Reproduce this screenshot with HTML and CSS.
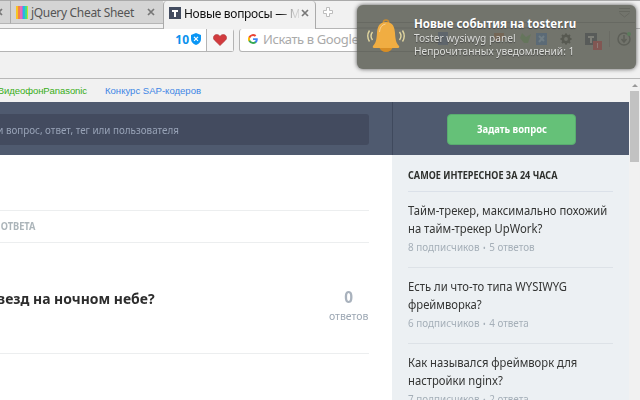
FILE: index.html
```html
<!DOCTYPE html>
<html lang="ru">
<head>
<meta charset="utf-8">
<title>Новые вопросы</title>
<link rel="stylesheet" href="styles.css">
</head>
<body>
<div class="window">
  <div class="tabs">
    <div class="tab tab-prev"><svg class="close" viewBox="0 0 8 8"><path d="M1 1l6 6M7 1L1 7"/></svg></div>
    <div class="tab tab-jquery"><i class="stripes"></i><span class="t-jquery">jQuery Cheat Sheet</span><svg class="close" viewBox="0 0 8 8"><path d="M1 1l6 6M7 1L1 7"/></svg></div>
    <div class="tab tab-active"><svg class="fav" viewBox="0 0 12 12"><path fill="#434c60" d="M0 0h12v12H0z"/><path fill="#fff" d="M3 3h6v2H7v5H5V5H3z"/></svg><span class="t-active">Новые вопросы — М</span><svg class="close" viewBox="0 0 8 8"><path d="M1 1l6 6M7 1L1 7"/></svg></div>
    <svg class="plus" viewBox="0 0 12 12"><path fill="#fff" stroke="#bdbdbd" d="M4.5 1.5h3v3h3v3h-3v3h-3v-3h-3v-3h3z"/></svg>
  </div>
  <div class="toolbar">
    <div class="address">
      <div class="blocked"><span>10</span><svg viewBox="0 0 10 12"><path fill="#0a96f5" d="M5 0l5 2v4q0 4-5 6Q0 10 0 6V2z"/><path stroke="#fff" stroke-width="1.2" d="M3 3.800l4 4M7 3.800l-4 4"/></svg></div>
      <div class="like"><svg viewBox="0 0 14 12"><path fill="#d23b3e" stroke="#a93a3c" stroke-width=".6" d="M7 11.600L1.300 6C-.7 3.500 1 .5 3.700.5 5.500.5 6.500 1.500 7 2.500 7.500 1.500 8.500.5 10.300.5 13 .5 14.700 3.500 12.700 6z"/></svg></div>
    </div>
    <div class="google"><svg viewBox="0 0 24 24"><path fill="#4285f4" d="M23.500 12.300c0-.8-.1-1.600-.2-2.300H12v4.500h6.500a5.500 5.500 0 0 1-2.400 3.600v3h3.900c2.200-2 3.500-5.100 3.500-8.800z"/><path fill="#34a853" d="M12 24c3.200 0 6-1.100 8-2.900l-3.900-3a7.200 7.200 0 0 1-10.800-3.800h-4v3.100A12 12 0 0 0 12 24z"/><path fill="#fbbc05" d="M5.300 14.300a7.200 7.200 0 0 1 0-4.600V6.600h-4a12 12 0 0 0 0 10.800z"/><path fill="#ea4335" d="M12 4.800c1.800 0 3.300.6 4.600 1.800L20 3.200A12 12 0 0 0 1.300 6.600l4 3.100A7.200 7.200 0 0 1 12 4.800z"/></svg><span>Искать в Google п</span></div>
  </div>
  <div class="ads"><div class="ad-green"><span>ВидеофонPanasonic</span></div><span class="ad-blue">Конкурс SAP-кодеров</span></div>
  <div class="viewport">
    <main class="main">
      <div class="head"><div class="search"><div class="search-text"><span>и вопрос, ответ, тег или пользователя</span></div></div></div>
      <div class="filters"><div class="filter"><span>ОТВЕТА</span></div></div>
      <div class="question">
        <div class="title"><span>везд на ночном небе?</span></div>
        <div class="answers"><b>0</b><span>ответов</span></div>
      </div>
    </main>
    <aside class="side">
      <div class="side-head"><div class="ask"><span>Задать вопрос</span></div></div>
      <div class="side-body">
        <h2><span>САМОЕ ИНТЕРЕСНОЕ ЗА 24 ЧАСА</span></h2>
        <article><p>Тайм-трекер, максимально похожий<br>на тайм-трекер UpWork?</p><small>8 подписчиков <i>•</i> 5 ответов</small></article>
        <article><p>Есть ли что-то типа WYSIWYG<br>фреймворка?</p><small>6 подписчиков <i>•</i> 4 ответа</small></article>
        <article><p>Как назывался фреймворк для<br>настройки nginx?</p><small>7 подписчиков <i>•</i> 2 ответа</small></article>
      </div>
    </aside>
    <div class="scroll"><i class="arrow"></i><i class="thumb"></i></div>
  </div>
  <div class="toast">
    <svg class="ghosts" viewBox="0 0 278 64" fill="none">
      <path d="M0 17.500h278M0 23h193M0 46.500h193" stroke="#4a4c46" stroke-opacity=".45"/>
      <path fill="#535e6c" d="M81 27h10v13H81z"/><path fill="#775e47" d="M137 28h10v8h-10z"/><path fill="#5e7752" d="M165 28l4 4 5-3-3 9h-4l-4-5z"/>
      <rect x="179" y="28" width="11" height="12" fill="#4c657d"/><path stroke="#718596" stroke-width="2" d="M182 31l5 5M187 31l-5 6"/>
      <circle cx="209" cy="34" r="3.200" stroke="#474941" stroke-width="2.600"/><path stroke="#474941" stroke-width="2" d="M209 28.500v2M209 37v2.500M203.500 34h2M212.500 34h2M205 30l1.500 1.500M213 30l-1.500 1.500M205 38l1.500-1.500M213 38l-1.500-1.500"/>
      <path fill="#484c4e" d="M228 28h12v12h-12z"/><path fill="#85867f" d="M231 31h6v2h-2v5h-2v-5h-2z"/><path fill="#8b4543" d="M236 36h9v9h-9z"/><path stroke="#a2817d" d="M240.500 38v5"/>
      <path stroke="#65665f" d="M252.500 26v16"/><circle cx="267" cy="34" r="6" stroke="#50524b" stroke-width="1.500"/><path stroke="#50524b" stroke-width="1.500" d="M267 30v6M264.500 34l2.500 3 2.500-3"/><circle cx="272" cy="29" r="2" fill="#4c8050"/>
      <path stroke="#5e5f58" d="M262 3.500h11M262 6.500h11M262.500 8l5 4 5-4"/>
    </svg>
    <svg class="bell" viewBox="0 0 38 36" fill="none"><circle cx="19" cy="4.500" r="2.600" stroke="#c88b30" stroke-width="1.500"/><path fill="#d88e25" d="M12 29h14q-2 5-7 5t-7-5z"/><path fill="#f0ad42" d="M19 4c-7 0-8.500 5-9 11-.4 6-1 10-4 13-.6 1.200 0 2 1 2h24c1 0 1.600-.8 1-2-3-3-3.600-7-4-13-.5-6-2-11-9-11z"/><path stroke="#f8d295" d="M12.500 14q.5-7 6-8"/><path stroke="#e0d59f" stroke-width="1.400" d="M5.500 14q-3 4 0 8M2.500 12.500q-3.500 5.500 0 11M32.500 14q3 4 0 8M35.500 12.500q3.500 5.500 0 11"/></svg>
    <div class="toast-text"><b>Новые события на toster.ru</b><span class="narrow">Toster wysiwyg panel</span><span class="narrow">Непрочитанных уведомлений: 1</span></div>
  </div>
</div>
</body>
</html>
```
FILE: styles.css
```css
*{box-sizing:border-box}
body{margin:0;font-family:"Noto Sans",sans-serif;white-space:nowrap}
svg,i{display:block;flex:none}
.window{position:relative;width:640px;height:400px;overflow:hidden;background:#f1f1f1;display:flex;flex-direction:column}
.tabs{height:29px;flex:none;display:flex;align-items:flex-start;border-top:1px solid #aaa;border-bottom:1px solid #b5b5b5}
.tab{display:flex;align-items:center;background:#d4d4d4;height:23px;border-bottom:1px solid #b5b5b5;font-size:12px;color:#555}
.close{width:8px;height:8px;fill:none;stroke:#777;stroke-width:1.700}
.tab-prev{width:11px;border-right:1px solid #aaa}
.tab-prev .close{margin-left:-5px}
.tab-jquery{width:152px;padding-left:5px}
.tab-jquery .close{margin-left:auto;margin-right:8px}
.stripes{width:12px;height:13px;margin-right:3px;background:linear-gradient(90deg,#f6c624 0 2px,#f3804c 2px 4px,#e96bb5 4px 6px,#9a76dc 6px 7px,#25b9e0 7px 9px,#3edb93 9px 11px,#c1e52c 11px)}
.t-jquery{letter-spacing:-.32px}
.tab-active{width:153px;height:28px;background:#f1f1f1;border:1px solid #aaa;border-width:0 1px;border-radius:4px 4px 0 0;padding:0 0 4px 5px;color:#222}
.fav{width:12px;height:12px;margin-right:3px}
.t-active{width:115px;overflow:hidden;letter-spacing:-.3px;background:linear-gradient(90deg,#111 83%,#ccc 96%);-webkit-background-clip:text;color:transparent}
.tab-active .close{margin-left:2px}
.plus{width:12px;height:12px;margin:5px 0 0 6px}
.toolbar{height:50px;flex:none;display:flex;border-bottom:1px solid #b8b8b8}
.address{width:234px;height:23px;background:#fff;border:1px solid #b4b4b4;border-width:0 1px 1px 0;border-radius:0 3px 3px 0;display:flex;justify-content:flex-end}
.blocked{display:flex;align-items:center;gap:2px;padding:0 5px 2px 0;font:bold 12px "Noto Sans";color:#0a91ed;border-right:1px solid #b4b4b4}
.blocked svg{width:10px;height:12px}
.like{width:26px;display:flex;align-items:center;justify-content:center;padding-bottom:1px;background:#f6f6f6}
.like svg{width:14px;height:12px}
.google{margin-left:5px;width:311px;height:23px;background:#fff;border:1px solid #b4b4b4;border-top:0;border-radius:3px;display:flex;align-items:center;padding:0 0 2px 8px;gap:5px;color:#aaa;font-size:13px}
.google svg{width:10px;height:10px}
.google span{letter-spacing:-.38px}
.ads{height:23px;flex:none;display:flex;align-items:center;gap:19px;font:9.550px "Liberation Sans",sans-serif}
.ad-green{width:87px;display:flex;justify-content:flex-end;color:#39ad18;letter-spacing:-.1px}
.ad-blue{color:#4086e5;margin-left:-1px}
.viewport{flex:1;display:flex;min-height:0}
.main{width:392px;background:#fff}
.head,.side-head{height:53px;background:#4f5a6f}
.head{padding-top:12px}
.search{width:369px;height:31px;background:#434b5f;border-radius:0 3px 3px 0;display:flex;align-items:center}
.search-text{width:179px;display:flex;justify-content:flex-end;font-size:10.500px;color:#98a3b7}
.search-text span{transform:scaleX(.937);transform-origin:right}
.filters{width:369px;height:33px;margin-top:55px;border:1px solid #eceeef;border-width:1px 0;display:flex;align-items:center}
.filter{width:35px;padding-bottom:2px;display:flex;justify-content:flex-end;font-size:10.500px;font-weight:bold;color:#acb5ba}
.filter span{transform:scaleX(.88);transform-origin:right}
.question{width:369px;height:111px;border-bottom:1px solid #eceeef;display:flex;align-items:center}
.title{width:155px;display:flex;justify-content:flex-end;font-weight:bold;font-size:15px;color:#2d2d2d}
.title span{transform:scaleX(.93);transform-origin:right}
.answers{width:40px;margin-left:auto;padding-top:15px;display:flex;flex-direction:column;align-items:center;font-size:11.500px;line-height:18px;color:#9ca7b3}
.answers b{font-size:16.500px;line-height:20px;font-weight:700;transform:scaleX(.93);color:#a9b2bd}
.answers span{transform:scaleX(.91)}
.side{width:237px;background:#ecf0f3}
.side-head{border-left:1px solid #3f495d;padding:12px 0 0 54px}
.ask{width:129px;height:31px;border-radius:4px;background:#65c178;border:1px solid #59ac70;color:#fff;font-size:10.500px;font-weight:bold;display:flex;align-items:center;justify-content:center;padding-bottom:1px}
.ask span{transform:scaleX(.9)}
.side-body{width:221px;padding-left:16px}
h2{height:37px;margin:0;border-bottom:1px solid #dbe1e9;font-size:10.500px;line-height:40px;color:#2e302d}
h2 span{display:inline-block;transform:scaleX(.865);transform-origin:left}
article{height:76px;padding-top:10px;border-bottom:1px solid #dde2e7}
p{margin:0;font-size:12.500px;line-height:18px;color:#343534;transform:scaleX(.9);transform-origin:left}
small{display:block;font-size:11.200px;line-height:18px;color:#a5afb8;transform:scaleX(.885);transform-origin:left}
small i{display:inline;font-style:normal;font-size:8px;margin:0 1px}
.scroll{width:11px;display:flex;flex-direction:column;align-items:flex-end;margin-top:-18px;gap:4px;background:#f1f1f1;padding-right:1px}
.arrow{width:0;height:0;border:3px solid transparent;border-top:0;border-bottom-color:#999;margin-right:1px}
.thumb{width:9px;height:71px;background:#c2c2c2}
.toast{position:absolute;left:357px;top:5px;width:279px;height:64px;border-radius:6px;background:#72746c;box-shadow:0 0 4px #555;display:flex;align-items:center;color:#dcddda}
.ghosts{position:absolute;left:0;top:0;width:278px;height:64px;opacity:.6}
.bell{position:relative;width:38px;height:36px;margin:-3px 9px 0 10px}
.toast-text{position:relative;display:flex;flex-direction:column;font-size:11px;line-height:13px;text-shadow:0 1px 1px #444}
.toast-text b{font-size:11.500px;line-height:14px;color:#fff}
.narrow{transform:scaleX(.925);transform-origin:left}
```
